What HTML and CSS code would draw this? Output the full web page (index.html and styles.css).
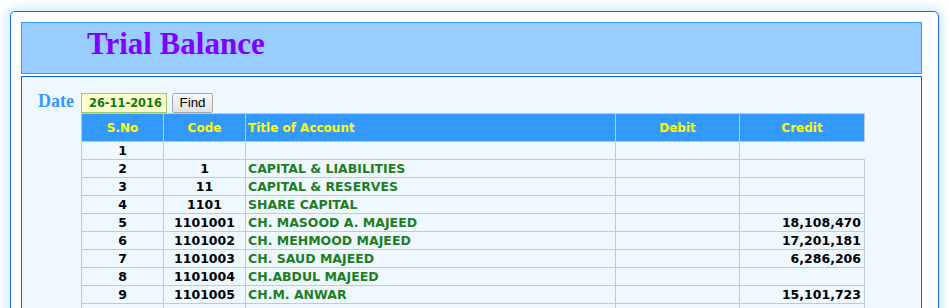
FILE: index.html
```html
<!DOCTYPE html>
<html>
<head>
<meta charset="utf-8">
<title>Trial Balance</title>
<link rel="stylesheet" href="styles.css">
</head>
<body>
<div class="panel">
  <div class="banner"><h1 class="title">Trial Balance</h1></div>
  <div class="content">
    <form class="date-row">
      <label class="date-label">Date</label>
      <input class="date-input" type="text" value="26-11-2016">
      <button class="find-btn" type="button">Find</button>
    </form>
    <table class="tb">
      <colgroup>
        <col class="c-sno"><col class="c-code"><col class="c-title"><col class="c-debit"><col class="c-credit">
      </colgroup>
      <thead>
        <tr><th>S.No</th><th>Code</th><th class="left">Title of Account</th><th>Debit</th><th>Credit</th></tr>
      </thead>
      <tbody>
        <tr><td class="num">1</td><td class="num"></td><td class="acct"></td><td class="amt"></td></tr>
        <tr><td class="num">2</td><td class="num">1</td><td class="acct">CAPITAL &amp; LIABILITIES</td><td class="amt"></td><td class="amt"></td></tr>
        <tr><td class="num">3</td><td class="num">11</td><td class="acct">CAPITAL &amp; RESERVES</td><td class="amt"></td><td class="amt"></td></tr>
        <tr><td class="num">4</td><td class="num">1101</td><td class="acct">SHARE CAPITAL</td><td class="amt"></td><td class="amt"></td></tr>
        <tr><td class="num">5</td><td class="num">1101001</td><td class="acct">CH. MASOOD A. MAJEED</td><td class="amt"></td><td class="amt">18,108,470</td></tr>
        <tr><td class="num">6</td><td class="num">1101002</td><td class="acct">CH. MEHMOOD MAJEED</td><td class="amt"></td><td class="amt">17,201,181</td></tr>
        <tr><td class="num">7</td><td class="num">1101003</td><td class="acct">CH. SAUD MAJEED</td><td class="amt"></td><td class="amt">6,286,206</td></tr>
        <tr><td class="num">8</td><td class="num">1101004</td><td class="acct">CH.ABDUL MAJEED</td><td class="amt"></td><td class="amt"></td></tr>
        <tr><td class="num">9</td><td class="num">1101005</td><td class="acct">CH.M. ANWAR</td><td class="amt"></td><td class="amt">15,101,723</td></tr>
        <tr><td class="num">10</td><td class="num">1101006</td><td class="acct">CH. ZAHID MAJEED</td><td class="amt"></td><td class="amt"></td></tr>
        <tr><td class="num">11</td><td class="num">12</td><td class="acct">LONG TERM LOANS</td><td class="amt"></td><td class="amt"></td></tr>
      </tbody>
    </table>
  </div>
</div>
</body>
</html>
```

FILE: styles.css
```css
html { overflow: hidden; }
body {
  margin: 0;
  padding: 11px 11px 0 10px;
  background: #ffffff;
  font-family: "DejaVu Sans", Verdana, sans-serif;
}
.panel {
  border: 1px solid #1a66ff;
  border-radius: 5px;
  background: #ffffff;
  padding: 10px 16px 20px 10px;
  box-shadow: 0 0 12px 2px #c4e4f6;
  min-height: 400px;
}
.banner {
  background: #99ccff;
  border: 1px solid #3399ff;
  height: 50px;
  box-sizing: content-box;
}
.title {
  margin: 0;
  padding: 6px 0 0 65px;
  font-family: "Liberation Serif", "Times New Roman", serif;
  font-weight: bold;
  font-size: 31px;
  line-height: 30px;
  color: #8000ff;
}
.content {
  margin-top: 2px;
  border: 1px solid #0066ff;
  background: #f0f8ff;
  padding: 14px 0 40px 16px;
  min-height: 300px;
}
.date-row {
  display: flex;
  align-items: baseline;
  margin: 0;
}
.date-label {
  font-family: "Liberation Serif", "Times New Roman", serif;
  font-weight: bold;
  font-size: 18px;
  color: #3399ff;
  width: 43px;
}
.date-input {
  box-sizing: border-box;
  width: 86px;
  height: 20px;
  margin: 0;
  padding: 0 0 0 7px;
  border: 1px solid #99cc66;
  background: #ffffcc;
  font-family: "DejaVu Sans", Verdana, sans-serif;
  font-weight: bold;
  font-size: 11.4px;
  color: #107a10;
  outline: none;
}
.find-btn {
  box-sizing: border-box;
  margin: 0 0 0 5px;
  width: 41px;
  height: 20px;
  padding: 0;
  border: 1px solid #a8a8a8;
  border-radius: 2px;
  background: linear-gradient(#f8f8f8, #e2e2e2);
  font-family: "Liberation Sans", Arial, sans-serif;
  font-size: 13.33px;
  color: #000;
}
.tb {
  margin: 0 0 0 43px;
  border-collapse: collapse;
  table-layout: fixed;
  width: 783px;
  font-family: "DejaVu Sans", Verdana, sans-serif;
  font-weight: bold;
  font-size: 12.5px;
}
.c-sno { width: 82px; }
.c-code { width: 82px; }
.c-title { width: 370px; }
.c-debit { width: 124px; }
.c-credit { width: 125px; }
.tb th {
  background: #3399ff;
  color: #ffff00;
  border: 1px solid #c8c8c8;
  height: 27px;
  padding: 0 2px;
  font-size: 12px;
  text-align: center;
}
.tb th.left { text-align: left; }
.tb td {
  border: 1px solid #c8c8c8;
  height: 17px;
  padding: 0 3px;
  line-height: 17px;
  white-space: nowrap;
  overflow: hidden;
}
.tb td.num { text-align: center; color: #000; }
.tb td.acct { text-align: left; color: #1e7d1e; padding-left: 2px; }
.tb td.amt { text-align: right; color: #000; }
```
